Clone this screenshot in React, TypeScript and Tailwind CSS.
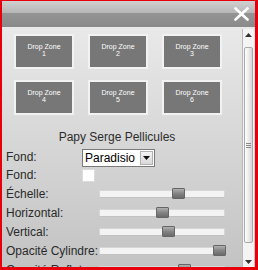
import React from 'react';

const zones = [1, 2, 3, 4, 5, 6];

const sliders = [
  { label: 'Échelle', pos: 72 },
  { label: 'Horizontal', pos: 56 },
  { label: 'Vertical', pos: 62 },
  { label: 'Opacité Cylindre', pos: 113 },
  { label: 'Opacité Reflet', pos: 78 },
];

const Slider: React.FC<{ pos: number }> = ({ pos }) => (
  <div className="relative w-[126px] h-[8px] bg-[#f3f3f3] border border-[#d6d6d6] border-b-[#c2c2c2]">
    {/* thumb */}
    <div
      className="absolute top-[-3px] w-[13px] h-[11px] rounded-[1px] border border-[#666] bg-gradient-to-b from-[#b0b0b0] via-[#848484] to-[#6a6a6a]"
      style={{ left: pos }}
    />
  </div>
);

export default function App() {
  return (
    <div
      className="w-[258px] h-[270px] overflow-hidden border-red-600 border-t-[1px] border-l-[2px] border-r-[3px] border-b-[3px] flex flex-col"
      style={{ fontFamily: '"Liberation Sans", Arial, sans-serif' }}
    >
      {/* Title bar */}
      <div className="h-[26px] shrink-0 flex flex-col relative">
        <div className="h-[12px] bg-gradient-to-b from-[#d0d0d0] to-[#b6b6b6]" />
        <div className="h-[14px] bg-gradient-to-b from-[#949494] to-[#8a8a8a]" />
        <svg className="absolute left-[232px] top-[6px]" width="15" height="14" viewBox="0 0 15 14">
          <path d="M1.5 1.5 L13.5 12.5 M13.5 1.5 L1.5 12.5" stroke="#fff" strokeWidth="2.6" strokeLinecap="round" />
        </svg>
      </div>

      <div className="flex flex-1 min-h-0 bg-gradient-to-b from-[#e9e9e9] via-[#d6d6d6] to-[#c3c3c3]">
        {/* Main panel */}
        <div className="flex-1 min-w-0 flex flex-col">
          <div className="grid grid-cols-[60px_60px_60px] gap-x-[14px] gap-y-[11px] pl-[12px] pt-[7px]">
            {zones.map((z) => (
              <div
                key={z}
                className="h-[35px] bg-[#777777] border-2 border-[#f2f2f2] text-white text-[7px] leading-[7px] text-center pt-[7px]"
              >
                Drop Zone
                <br />
                {z}
              </div>
            ))}
          </div>

          <div className="mt-[15px] h-[14px] text-[12px] leading-[14px] text-[#2d2d2d] text-center pr-[10px]">
            Papy Serge Pellicules
          </div>

          <div className="mt-[3px] pl-[4px] flex flex-col text-[12px] text-[#2a2a2a]">
            <div className="h-[19px] flex items-center">
              <span className="w-[76px]">Fond:</span>
              <div className="flex items-center w-[73px] h-[18px] bg-white border border-[#7a7a7a] mt-[2px]">
                <span className="flex-1 pl-[2px] text-black text-[12px] leading-[14px]">Paradisio</span>
                <div className="w-[13px] h-[14px] mr-[1px] bg-gradient-to-b from-[#f4f4f4] to-[#d8d8d8] border border-[#b0b0b0] flex items-center justify-center">
                  <svg width="7" height="4" viewBox="0 0 7 4">
                    <path d="M0 0 L7 0 L3.5 4 Z" fill="#111" />
                  </svg>
                </div>
              </div>
            </div>
            <div className="h-[18px] flex items-center">
              <span className="w-[76px]">Fond:</span>
              <div className="w-[13px] h-[13px] bg-white border border-[#dcdcdc]" />
            </div>
            {sliders.map((s) => (
              <div key={s.label} className="h-[19px] flex items-center">
                <span className="w-[93px] whitespace-nowrap">{s.label}:</span>
                <Slider pos={s.pos} />
              </div>
            ))}
          </div>
        </div>

        {/* Scrollbar */}
        <div className="w-[13px] shrink-0 flex flex-col pt-[2px]">
          <div className="w-[12px] flex-1 flex flex-col bg-[#f4f4f4] border-l border-[#b9b9b9]">
            <div className="h-[12px] flex items-center justify-center">
              <svg width="7" height="4" viewBox="0 0 7 4">
                <path d="M3.5 0 L7 4 L0 4 Z" fill="#333" />
              </svg>
            </div>
            <div className="mt-[6px] h-[196px] mx-[1px] rounded-[2px] border border-[#a9a9a9] bg-gradient-to-r from-[#ffffff] via-[#ececec] to-[#d6d6d6] flex items-center justify-center">
              <div className="flex flex-col gap-[1px]">
                <div className="w-[5px] h-[1px] bg-[#8a8a8a]" />
                <div className="w-[5px] h-[1px] bg-[#8a8a8a]" />
                <div className="w-[5px] h-[1px] bg-[#8a8a8a]" />
              </div>
            </div>
            <div className="flex-1" />
            <div className="h-[10px] flex items-center justify-center">
              <svg width="7" height="4" viewBox="0 0 7 4">
                <path d="M0 0 L7 0 L3.5 4 Z" fill="#333" />
              </svg>
            </div>
          </div>
        </div>
      </div>
    </div>
  );
}
